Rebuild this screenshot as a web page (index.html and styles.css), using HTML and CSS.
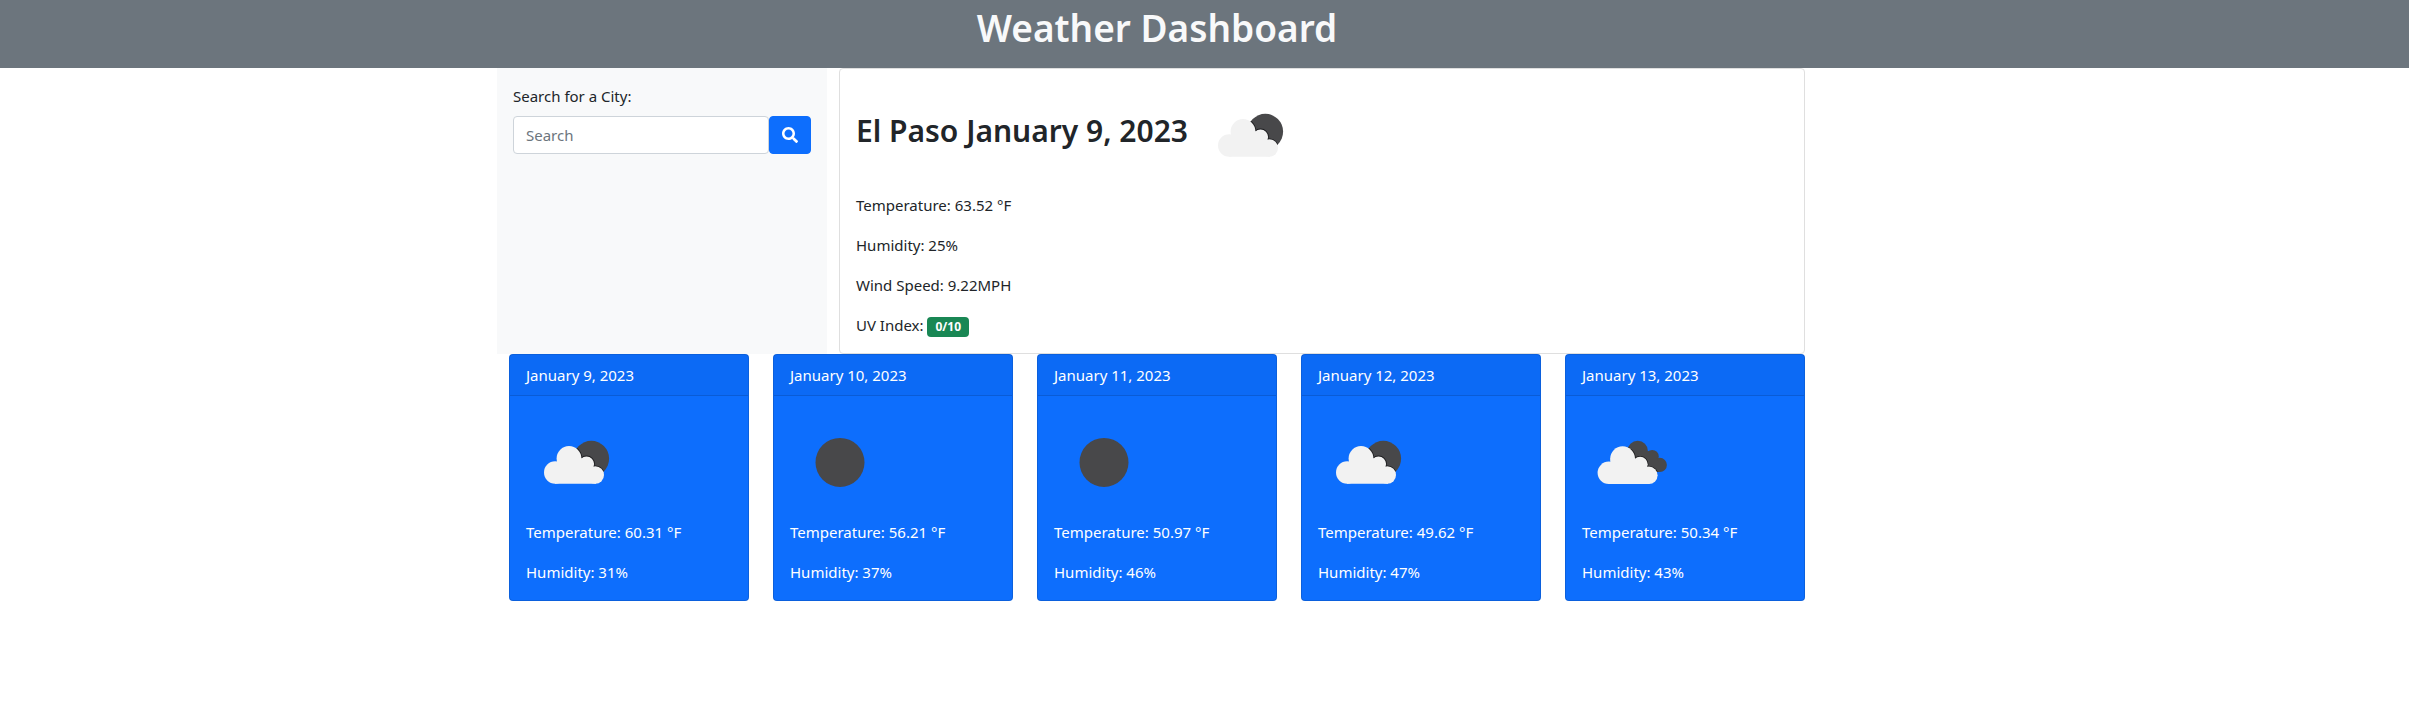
FILE: index.html
```html
<!DOCTYPE html>
<html lang="en">
<head>
<meta charset="utf-8">
<meta name="viewport" content="width=device-width, initial-scale=1">
<title>Weather Dashboard</title>
<link rel="stylesheet" href="styles.css">
</head>
<body>
<svg class="sprite" aria-hidden="true">
  <defs>
    <clipPath id="moon-clip"><circle cx="65.3" cy="46.6" r="17.8"/></clipPath>
    <g id="cloud">
      <circle cx="29.2" cy="60.5" r="11.2"/>
      <circle cx="43" cy="46.4" r="12.4"/>
      <circle cx="60.5" cy="52" r="7.6"/>
      <circle cx="69.3" cy="63" r="8.7"/>
      <path d="M29 50H31V46H55L67 55L70 63V71.7H29Z"/>
    </g>
    <g id="back-cloud">
      <circle cx="55.7" cy="39" r="10.2"/>
      <circle cx="70.2" cy="44.5" r="6.6"/>
      <circle cx="77.8" cy="52.9" r="7.1"/>
      <path d="M55 40L70 39L77 50V60H60Z"/>
    </g>
    <clipPath id="back-clip">
      <circle cx="55.7" cy="39" r="10.2"/>
      <circle cx="70.2" cy="44.5" r="6.6"/>
      <circle cx="77.8" cy="52.9" r="7.1"/>
      <path d="M55 40L70 39L77 50V60H60Z"/>
    </clipPath>
    <symbol id="broken" viewBox="0 0 100 100">
      <circle cx="65.3" cy="46.6" r="17.8" fill="#48484a"/>
      <g clip-path="url(#moon-clip)"><use href="#cloud" fill="#1c1c1e" stroke="#1c1c1e" stroke-width="1.6"/></g>
      <use href="#cloud" fill="#f2f2f2"/>
    </symbol>
    <symbol id="clear" viewBox="0 0 100 100">
      <circle cx="50" cy="50.4" r="24.5" fill="#48484a"/>
    </symbol>
    <symbol id="overcast" viewBox="0 0 100 100">
      <use href="#back-cloud" fill="#48484a"/>
      <g clip-path="url(#back-clip)"><use href="#cloud" x="-2.4" y=".5" fill="#1c1c1e" stroke="#1c1c1e" stroke-width="1.6"/></g>
      <use href="#cloud" x="-2.4" y=".3" fill="#f2f2f2"/>
    </symbol>
  </defs>
</svg>

<header class="banner"><h1 class="banner-title">Weather Dashboard</h1></header>

<main class="page">
  <div class="container">
    <div class="top">
      <aside class="sidebar">
        <form>
          <label class="search-label" for="city">Search for a City:</label>
          <div class="search-group">
            <input class="search-input" id="city" type="text" placeholder="Search">
            <button class="search-button" type="button" aria-label="Search">
              <svg viewBox="0 0 512 512" width="16" height="16" fill="currentColor" aria-hidden="true"><path d="M505 442.7L405.300 343c-4.500-4.500-10.600-7-17-7H372c27.600-35.300 44-79.700 44-128C416 93.100 322.900 0 208 0S0 93.100 0 208s93.100 208 208 208c48.300 0 92.700-16.400 128-44v16.300c0 6.400 2.500 12.500 7 17l99.700 99.700c9.400 9.400 24.600 9.400 33.900 0l28.300-28.300c9.400-9.400 9.400-24.600.1-34zM208 336c-70.700 0-128-57.200-128-128 0-70.700 57.200-128 128-128 70.700 0 128 57.200 128 128 0 70.700-57.200 128-128 128z"/></svg>
            </button>
          </div>
        </form>
      </aside>
      <section class="current">
        <div class="current-head">
          <h2 class="current-title">El Paso January 9, 2023</h2>
          <svg class="weather-icon" role="img" aria-label="Broken clouds"><use href="#broken"/></svg>
        </div>
        <p>Temperature: 63.52 °F</p>
        <p>Humidity: 25%</p>
        <p>Wind Speed: 9.22MPH</p>
        <p>UV Index: <span class="badge">0/10</span></p>
      </section>
    </div>
    <section class="forecast">
      <article class="day">
        <div class="day-date">January 9, 2023</div>
        <div class="day-body">
          <svg class="weather-icon" role="img" aria-label="Broken clouds"><use href="#broken"/></svg>
          <p>Temperature: 60.31 °F</p>
          <p>Humidity: 31%</p>
        </div>
      </article>
      <article class="day">
        <div class="day-date">January 10, 2023</div>
        <div class="day-body">
          <svg class="weather-icon" role="img" aria-label="Clear sky"><use href="#clear"/></svg>
          <p>Temperature: 56.21 °F</p>
          <p>Humidity: 37%</p>
        </div>
      </article>
      <article class="day">
        <div class="day-date">January 11, 2023</div>
        <div class="day-body">
          <svg class="weather-icon" role="img" aria-label="Clear sky"><use href="#clear"/></svg>
          <p>Temperature: 50.97 °F</p>
          <p>Humidity: 46%</p>
        </div>
      </article>
      <article class="day">
        <div class="day-date">January 12, 2023</div>
        <div class="day-body">
          <svg class="weather-icon" role="img" aria-label="Broken clouds"><use href="#broken"/></svg>
          <p>Temperature: 49.62 °F</p>
          <p>Humidity: 47%</p>
        </div>
      </article>
      <article class="day">
        <div class="day-date">January 13, 2023</div>
        <div class="day-body">
          <svg class="weather-icon" role="img" aria-label="Overcast"><use href="#overcast"/></svg>
          <p>Temperature: 50.34 °F</p>
          <p>Humidity: 43%</p>
        </div>
      </article>
    </section>
  </div>
</main>
</body>
</html>
```
FILE: styles.css
```css
*, *::before, *::after { box-sizing: border-box; }

body {
  margin: 0;
  background: #fff;
  color: #212529;
  font-family: "Segoe UI", "Noto Sans", "Open Sans", sans-serif;
  font-size: 15px;
  line-height: 24px;
}

h1, h2, p { margin: 0; }

.sprite { position: absolute; width: 0; height: 0; }

.banner {
  padding: 4px 95px 16px 0;
  background: #6c757d;
  color: #f8f9fa;
  text-align: center;
}

.banner-title {
  font-size: 37px;
  font-weight: 600;
  line-height: 48px;
}

.page { padding-right: 95px; }

.container {
  width: 100%;
  max-width: 1320px;
  margin: 0 auto;
}

.top {
  display: grid;
  grid-template-columns: 1fr 3fr;
}

.sidebar {
  padding: 16px;
  background: #f8f9fa;
}

.search-label {
  display: block;
  margin-bottom: 8px;
}

.search-group { display: flex; }

.search-input {
  flex: 1;
  min-width: 0;
  height: 38px;
  padding: 6px 12px;
  border: 1px solid #ced4da;
  border-radius: 4px;
  background: #fff;
  color: #212529;
  font: inherit;
}

.search-input::placeholder { color: #6c757d; opacity: 1; }

.search-button {
  display: flex;
  align-items: center;
  justify-content: center;
  width: 42px;
  height: 38px;
  padding: 0;
  border: 1px solid #0d6efd;
  border-radius: 4px;
  background: #0d6efd;
  color: #fff;
}

.current {
  display: flex;
  flex-direction: column;
  gap: 16px;
  margin: 0 12px;
  padding: 16px;
  border: 1px solid #dfdfdf;
  border-radius: 4px;
  background: #fff;
}

.current-head {
  display: flex;
  align-items: center;
  gap: 12px;
  margin-bottom: -8px;
}

.current-title {
  padding-bottom: 8px;
  font-size: 30px;
  font-weight: 600;
  line-height: 38px;
}

.weather-icon {
  display: block;
  flex: none;
  width: 100px;
  height: 100px;
}

.badge {
  display: inline-block;
  padding: 4px 8px;
  border-radius: 4px;
  background: #198754;
  color: #fff;
  font-size: 12px;
  font-weight: 700;
  line-height: 12px;
}

.forecast {
  display: grid;
  grid-template-columns: repeat(5, 1fr);
  gap: 24px;
  padding: 0 12px;
}

.day {
  border: 1px solid rgba(0, 0, 0, 0.125);
  border-radius: 4px;
  background: #0d6efd;
  color: #fff;
}

.day-date {
  padding: 8px 16px;
  border-bottom: 1px solid rgba(0, 0, 0, 0.125);
  background: rgba(0, 0, 0, 0.03);
}

.day-body { padding: 16px; }
.day-body .weather-icon { margin-bottom: 8px; }
.day-body p + p { margin-top: 16px; }
```
